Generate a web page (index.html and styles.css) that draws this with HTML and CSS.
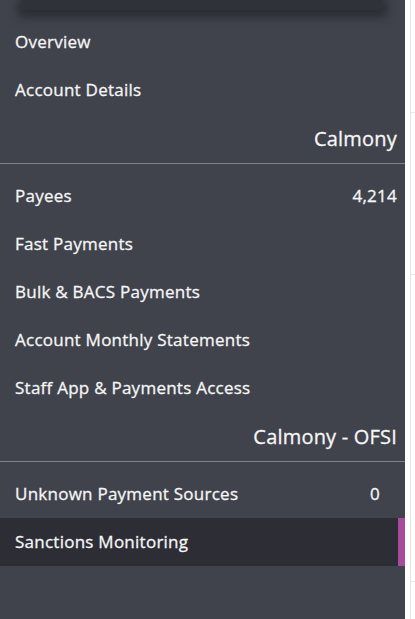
FILE: index.html
```html
<!DOCTYPE html>
<html>
<head>
<meta charset="utf-8">
<link rel="stylesheet" href="styles.css">
</head>
<body>
<div class="layout">
  <nav class="sidebar">
    <div class="topcard"></div>
    <a class="item">Overview</a>
    <a class="item">Account Details</a>
    <div class="group">Calmony</div>
    <div class="list">
      <a class="item"><span>Payees</span><span class="count">4,214</span></a>
      <a class="item">Fast Payments</a>
      <a class="item">Bulk &amp; BACS Payments</a>
      <a class="item">Account Monthly Statements</a>
      <a class="item">Staff App &amp; Payments Access</a>
    </div>
    <div class="group">Calmony - OFSI</div>
    <div class="list">
      <a class="item"><span>Unknown Payment Sources</span><span class="count zero">0</span></a>
      <a class="item active">Sanctions Monitoring</a>
    </div>
  </nav>
  <main class="main">
    <div class="rule r1"></div>
    <div class="rule r2"></div>
    <div class="rule r3"></div>
  </main>
</div>
</body>
</html>
```
FILE: styles.css
```css
html, body {
  margin: 0;
  padding: 0;
  background: #ffffff;
  height: 619px;
  overflow: hidden;
}
.layout {
  display: flex;
  height: 619px;
}
.sidebar {
  width: 405px;
  flex: 0 0 405px;
  background: #40434c;
  font-family: "Open Sans", "Noto Sans", sans-serif;
  font-weight: 400;
  color: #f6f6f6;
  -webkit-text-stroke: 0.3px #f6f6f6;
  display: flex;
  flex-direction: column;
}
.topcard {
  height: 10px;
  margin: 0 22px 8px 22px;
  background: #30323a;
  box-shadow: 0 3px 10px 4px rgba(40, 42, 50, 0.9);
}
.item {
  display: flex;
  align-items: center;
  justify-content: space-between;
  height: 48px;
  padding: 0 8px 2px 15px;
  font-size: 17px;
  letter-spacing: 0.25px;
  box-sizing: border-box;
}
.item.active {
  background: #2c2d35;
  border-right: 7px solid #a54c9d;
}
.count.zero {
  padding-right: 17px;
}
.group {
  height: 50px;
  box-sizing: border-box;
  border-bottom: 1px solid #80828a;
  display: flex;
  align-items: center;
  justify-content: flex-end;
  padding: 0 8px 1px 0;
  font-size: 20px;
  letter-spacing: 0.2px;
}
.list {
  padding-top: 8px;
}
.main {
  flex: 1;
  margin-left: 5px;
  border-left: 1px solid #e4e4e6;
  display: flex;
  flex-direction: column;
}
.rule {
  border-top: 1px solid #e8e8ea;
}
.r1 { margin-top: 112px; }
.r2 { margin-top: 161px; }
.r3 { margin-top: 306px; }
```
